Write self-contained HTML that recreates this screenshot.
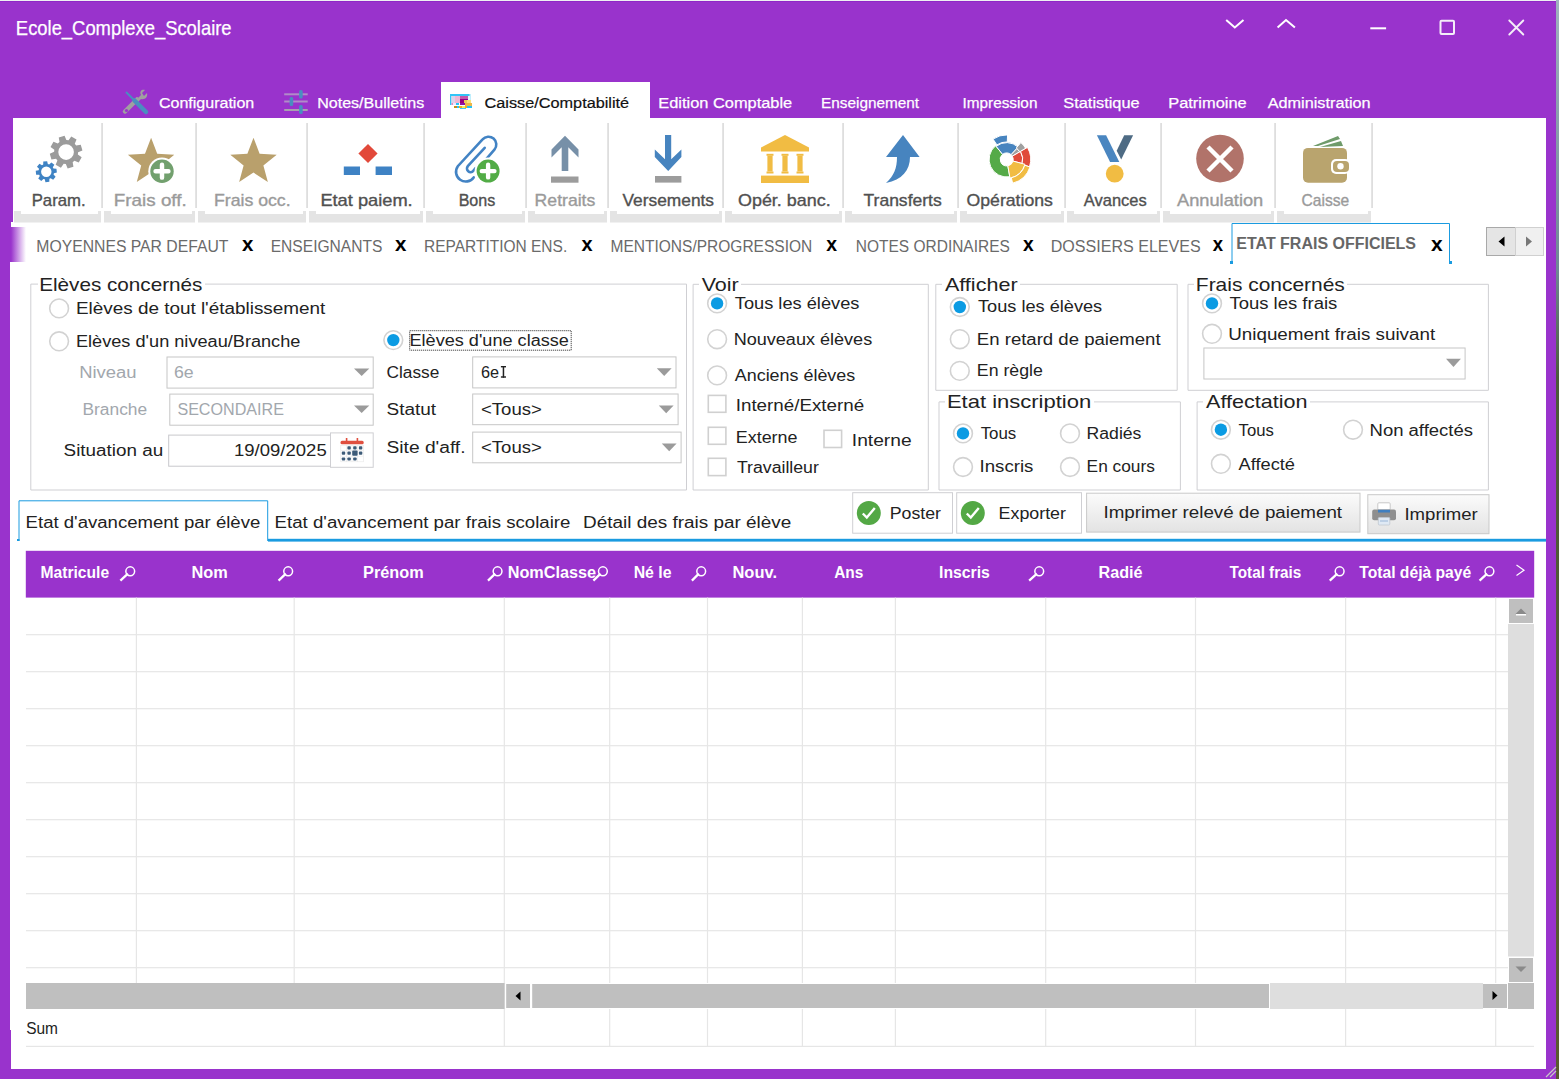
<!DOCTYPE html>
<html><head><meta charset="utf-8"><title>Ecole_Complexe_Scolaire</title>
<style>html,body{margin:0;padding:0;background:#9933cc;overflow:hidden;width:1559px;height:1079px}
svg{display:block} text{font-family:"Liberation Sans",sans-serif;white-space:pre}</style></head>
<body><svg width="1559" height="1079" viewBox="0 0 1559 1079">
<rect x="0.00" y="0.00" width="1559.00" height="1079.00" fill="#9933cc" />
<rect x="0.00" y="0.00" width="1559.00" height="1.00" fill="#eef0f2" />
<rect x="0.00" y="1.00" width="1556.00" height="0.60" fill="#8a20c4" />
<defs><linearGradient id="desk" x1="0" y1="0" x2="0" y2="1"><stop offset="0" stop-color="#9fb2bf"/><stop offset="0.25" stop-color="#6f8796"/><stop offset="0.35" stop-color="#4b5a3a"/><stop offset="1" stop-color="#5a5a30"/></linearGradient><linearGradient id="fade" x1="0" y1="0" x2="1" y2="0"><stop offset="0" stop-color="#9933cc"/><stop offset="1" stop-color="#ffffff"/></linearGradient><linearGradient id="btn" x1="0" y1="0" x2="0" y2="1"><stop offset="0" stop-color="#fbfbfb"/><stop offset="1" stop-color="#e3e3e3"/></linearGradient></defs>
<rect x="1556.00" y="0.00" width="3.00" height="1079.00" fill="url(#desk)" />
<rect x="13.00" y="118.00" width="1533.00" height="104.00" fill="#fff" />
<rect x="11.00" y="222.00" width="1535.00" height="847.00" fill="#fff" />
<rect x="10.00" y="262.00" width="1.00" height="768.00" fill="#fff" />
<path d="M1226.2,20 L1234.8,27.5 L1243.5,20" fill="none" stroke="#fff" stroke-width="2" />
<path d="M1277.6,27.5 L1286,20 L1294.9,27.5" fill="none" stroke="#fff" stroke-width="2" />
<rect x="1370.30" y="27.30" width="15.80" height="2.00" fill="#fff" />
<rect x="1440.5" y="20.7" width="13.5" height="13.3" fill="none" stroke="#f4eef8" stroke-width="2" rx="1"/>
<path d="M1509.3,20.5 L1523.3,34.5 M1523.3,20.5 L1509.3,34.5" fill="none" stroke="#f4eef8" stroke-width="1.9" stroke-linecap="round"/>
<rect x="441.00" y="82.00" width="209.00" height="36.00" fill="#fff" />
<path d="M125,111.5 L137,99.5" fill="none" stroke="#a0a0a0" stroke-width="4.5" stroke-linecap="round"/>
<path d="M136,100 L141,95 C139,91 142,89 145,90 L142,93 L144,96 L147,93 C148,97 145,100 141,99 L137,103 Z" fill="#a0a0a0" stroke="none" stroke-width="1" />
<circle cx="126.50" cy="110.50" r="1.60" fill="#9933cc" stroke="none" stroke-width="1" />
<path d="M126,92 L135,101" fill="none" stroke="#4a8ec0" stroke-width="2" />
<path d="M134.5,100.5 L146,112" fill="none" stroke="#4a8ec0" stroke-width="4.5" stroke-linecap="round"/>
<rect x="284.20" y="93.30" width="23.50" height="2.00" fill="#b08cc8" />
<rect x="284.20" y="100.50" width="23.50" height="2.00" fill="#b08cc8" />
<rect x="284.20" y="109.00" width="23.50" height="2.00" fill="#a8a0b0" />
<rect x="299.10" y="90.00" width="3.60" height="8.50" fill="#4a8ec0" rx="1.5"/>
<rect x="289.60" y="97.00" width="3.60" height="9.00" fill="#4a8ec0" rx="1.5"/>
<rect x="299.10" y="105.00" width="3.60" height="9.00" fill="#4a8ec0" rx="1.5"/>
<rect x="450.00" y="94.00" width="21.00" height="2.00" fill="#33c4f6" />
<rect x="450.00" y="94.00" width="1.50" height="11.00" fill="#33c4f6" />
<rect x="469.50" y="94.00" width="1.50" height="6.00" fill="#bfeefc" />
<rect x="451.50" y="96.00" width="3.50" height="7.00" fill="#dcd2ea" />
<rect x="455.00" y="96.00" width="5.00" height="7.00" fill="#efb6d4" />
<rect x="460.00" y="96.00" width="8.00" height="3.00" fill="#c458ac" />
<rect x="468.00" y="96.00" width="2.00" height="4.00" fill="#e6f8fe" />
<rect x="460.00" y="99.00" width="4.00" height="5.00" fill="#98007e" />
<rect x="463.00" y="99.00" width="5.00" height="1.00" fill="#8a0096" />
<rect x="464.00" y="100.00" width="7.00" height="3.00" fill="#ecc85a" />
<rect x="467.00" y="100.00" width="4.00" height="3.00" fill="#f7e27e" />
<rect x="460.00" y="103.00" width="5.00" height="2.00" fill="#8c12a6" />
<rect x="451.50" y="103.00" width="1.50" height="2.00" fill="#e088c4" />
<rect x="453.00" y="103.00" width="3.00" height="2.00" fill="#f2e2fe" />
<rect x="456.00" y="103.00" width="3.00" height="2.00" fill="#22c2f8" />
<rect x="465.00" y="103.00" width="7.00" height="3.00" fill="#eeb648" />
<rect x="454.00" y="106.00" width="3.00" height="2.00" fill="#c48a1e" />
<rect x="457.00" y="106.00" width="2.00" height="2.00" fill="#22c2f8" />
<rect x="459.00" y="106.00" width="8.00" height="2.00" fill="#eeb020" />
<rect x="462.00" y="106.00" width="3.00" height="2.00" fill="#f6ec60" />
<rect x="467.00" y="106.00" width="5.00" height="2.00" fill="#22c2f8" />
<rect x="460.00" y="108.00" width="6.00" height="1.00" fill="#44c8f8" />
<rect x="101.20" y="123.00" width="1.80" height="85.00" fill="#dedede" />
<rect x="195.20" y="123.00" width="1.80" height="85.00" fill="#dedede" />
<rect x="306.20" y="123.00" width="1.80" height="85.00" fill="#dedede" />
<rect x="423.20" y="123.00" width="1.80" height="85.00" fill="#dedede" />
<rect x="525.20" y="123.00" width="1.80" height="85.00" fill="#dedede" />
<rect x="607.20" y="123.00" width="1.80" height="85.00" fill="#dedede" />
<rect x="722.20" y="123.00" width="1.80" height="85.00" fill="#dedede" />
<rect x="842.20" y="123.00" width="1.80" height="85.00" fill="#dedede" />
<rect x="957.20" y="123.00" width="1.80" height="85.00" fill="#dedede" />
<rect x="1064.20" y="123.00" width="1.80" height="85.00" fill="#dedede" />
<rect x="1160.20" y="123.00" width="1.80" height="85.00" fill="#dedede" />
<rect x="1274.20" y="123.00" width="1.80" height="85.00" fill="#dedede" />
<rect x="1371.20" y="123.00" width="1.80" height="85.00" fill="#dedede" />
<rect x="14.00" y="211.00" width="87.00" height="11.50" fill="#e4e4e4" />
<rect x="21.00" y="211.00" width="77.00" height="3.00" fill="#fff" />
<rect x="104.00" y="211.00" width="91.00" height="11.50" fill="#e4e4e4" />
<rect x="111.00" y="211.00" width="81.00" height="3.00" fill="#fff" />
<rect x="198.00" y="211.00" width="108.00" height="11.50" fill="#e4e4e4" />
<rect x="205.00" y="211.00" width="98.00" height="3.00" fill="#fff" />
<rect x="309.00" y="211.00" width="114.00" height="11.50" fill="#e4e4e4" />
<rect x="316.00" y="211.00" width="104.00" height="3.00" fill="#fff" />
<rect x="426.00" y="211.00" width="99.00" height="11.50" fill="#e4e4e4" />
<rect x="433.00" y="211.00" width="89.00" height="3.00" fill="#fff" />
<rect x="528.00" y="211.00" width="79.00" height="11.50" fill="#e4e4e4" />
<rect x="535.00" y="211.00" width="69.00" height="3.00" fill="#fff" />
<rect x="610.00" y="211.00" width="112.00" height="11.50" fill="#e4e4e4" />
<rect x="617.00" y="211.00" width="102.00" height="3.00" fill="#fff" />
<rect x="725.00" y="211.00" width="117.00" height="11.50" fill="#e4e4e4" />
<rect x="732.00" y="211.00" width="107.00" height="3.00" fill="#fff" />
<rect x="845.00" y="211.00" width="112.00" height="11.50" fill="#e4e4e4" />
<rect x="852.00" y="211.00" width="102.00" height="3.00" fill="#fff" />
<rect x="960.00" y="211.00" width="104.00" height="11.50" fill="#e4e4e4" />
<rect x="967.00" y="211.00" width="94.00" height="3.00" fill="#fff" />
<rect x="1067.00" y="211.00" width="93.00" height="11.50" fill="#e4e4e4" />
<rect x="1074.00" y="211.00" width="83.00" height="3.00" fill="#fff" />
<rect x="1163.00" y="211.00" width="111.00" height="11.50" fill="#e4e4e4" />
<rect x="1170.00" y="211.00" width="101.00" height="3.00" fill="#fff" />
<rect x="1277.00" y="211.00" width="94.00" height="11.50" fill="#e4e4e4" />
<rect x="1284.00" y="211.00" width="84.00" height="3.00" fill="#fff" />
<path d="M77.85,154.53 L81.66,157.28 L78.74,162.55 L74.39,160.78 L72.69,162.13 L73.44,166.76 L67.64,168.43 L65.83,164.10 L63.67,163.85 L60.92,167.66 L55.65,164.74 L57.42,160.39 L56.07,158.69 L51.44,159.44 L49.77,153.64 L54.10,151.83 L54.35,149.67 L50.54,146.92 L53.46,141.65 L57.81,143.42 L59.51,142.07 L58.76,137.44 L64.56,135.77 L66.37,140.10 L68.53,140.35 L71.28,136.54 L76.55,139.46 L74.78,143.81 L76.13,145.51 L80.76,144.76 L82.43,150.56 L78.10,152.37 Z M73.90,152.10 A7.8,7.8 0 1,0 58.30,152.10 A7.8,7.8 0 1,0 73.90,152.10 Z" fill="#9b9b9b" stroke="none" stroke-width="1" fill-rule="evenodd"/>
<path d="M53.46,168.61 L56.46,168.67 L56.87,172.55 L53.95,173.23 L53.55,174.58 L55.62,176.74 L53.17,179.77 L50.63,178.19 L49.39,178.86 L49.33,181.86 L45.45,182.27 L44.77,179.35 L43.42,178.95 L41.26,181.02 L38.23,178.57 L39.81,176.03 L39.14,174.79 L36.14,174.73 L35.73,170.85 L38.65,170.17 L39.05,168.82 L36.98,166.66 L39.43,163.63 L41.97,165.21 L43.21,164.54 L43.27,161.54 L47.15,161.13 L47.83,164.05 L49.18,164.45 L51.34,162.38 L54.37,164.83 L52.79,167.37 Z M51.50,171.70 A5.2,5.2 0 1,0 41.10,171.70 A5.2,5.2 0 1,0 51.50,171.70 Z" fill="#3f83c4" stroke="none" stroke-width="1" fill-rule="evenodd"/>
<path d="M151.10,137.80 L157.21,153.79 L174.31,154.66 L160.99,165.41 L165.44,181.94 L151.10,172.59 L136.76,181.94 L141.21,165.41 L127.89,154.66 L144.99,153.79 Z" fill="#b9a06c" stroke="none" stroke-width="1" />
<circle cx="162.00" cy="171.20" r="13.70" fill="#fff" stroke="none" stroke-width="1" />
<circle cx="162.00" cy="171.20" r="11.70" fill="#72a06e" stroke="none" stroke-width="1" />
<path d="M155.57,171.20 L168.43,171.20 M162.00,164.77 L162.00,177.63" fill="none" stroke="#fff" stroke-width="4.446" stroke-linecap="round"/>
<path d="M253.50,137.80 L259.61,153.79 L276.71,154.66 L263.39,165.41 L267.84,181.94 L253.50,172.59 L239.16,181.94 L243.61,165.41 L230.29,154.66 L247.39,153.79 Z" fill="#b9a06c" stroke="none" stroke-width="1" />
<path d="M368,143.9 L377.6,153.5 L368,163.1 L358.4,153.5 Z" fill="#e2493a" stroke="none" stroke-width="1" />
<rect x="343.80" y="166.50" width="16.20" height="8.50" fill="#3e82c4" />
<rect x="375.60" y="166.50" width="16.40" height="8.50" fill="#3e82c4" />
<path d="M473.70,177.40 A9.2,9.2 0 1,1 457.81,166.22 L482.57,139.43 A7.8,7.8 0 0,1 494.43,149.57 L486.63,158.69" fill="none" stroke="#4283c4" stroke-width="2.6" stroke-linecap="round"/>
<path d="M484.70,147.80 L467.80,166.20 A3.6,3.6 0 0,0 473.27,170.88 L475.55,168.22" fill="none" stroke="#4283c4" stroke-width="2.6" stroke-linecap="round"/>
<circle cx="488.10" cy="171.10" r="13.50" fill="#fff" stroke="none" stroke-width="1" />
<circle cx="488.10" cy="171.10" r="11.50" fill="#52ac46" stroke="none" stroke-width="1" />
<path d="M481.78,171.10 L494.43,171.10 M488.10,164.78 L488.10,177.42" fill="none" stroke="#fff" stroke-width="4.37" stroke-linecap="round"/>
<path d="M565,135.8 L578.5,149.5 L578.5,157.4 L568.3,147.2 L568.3,171 L561.7,171 L561.7,147.2 L551.5,157.4 L551.5,149.5 Z" fill="#7790a8" stroke="none" stroke-width="1" />
<rect x="551.00" y="176.50" width="27.50" height="6.20" fill="#9c9c9c" />
<path d="M668.2,171 L681.4,157 L681.4,149.5 L671.2,159.3 L671.2,135 L665,135 L665,159.3 L654.8,149.5 L654.8,157 Z" fill="#4784bf" stroke="none" stroke-width="1" />
<rect x="655.00" y="176.00" width="26.40" height="6.60" fill="#9c9c9c" />
<path d="M785,135 L809,147.5 L809,151.6 L761,151.6 L761,147.5 Z" fill="#f1bc43" stroke="none" stroke-width="1" />
<rect x="766.50" y="153.80" width="7.00" height="2.00" fill="#f1bc43" />
<rect x="767.40" y="155.80" width="5.20" height="15.70" fill="#f1bc43" />
<rect x="766.50" y="171.50" width="7.00" height="2.00" fill="#f1bc43" />
<rect x="781.50" y="153.80" width="7.00" height="2.00" fill="#f1bc43" />
<rect x="782.40" y="155.80" width="5.20" height="15.70" fill="#f1bc43" />
<rect x="781.50" y="171.50" width="7.00" height="2.00" fill="#f1bc43" />
<rect x="796.50" y="153.80" width="7.00" height="2.00" fill="#f1bc43" />
<rect x="797.40" y="155.80" width="5.20" height="15.70" fill="#f1bc43" />
<rect x="796.50" y="171.50" width="7.00" height="2.00" fill="#f1bc43" />
<rect x="761.00" y="175.60" width="48.00" height="7.40" fill="#f1bc43" />
<path d="M903,135 L919.6,157 L910,157 C910,170 902,180 886,183 C894,176 897,168 897,157 L886,157 Z" fill="#4784bf" stroke="none" stroke-width="1" />
<path d="M1009.76,176.73 A17.6,17.6 0 0,1 995.62,145.72 L1002.61,154.35 A6.5,6.5 0 0,0 1007.83,165.80 Z" fill="#55aa48" stroke="#fff" stroke-width="1" />
<path d="M996.13,146.34 A16.8,16.8 0 0,1 1018.16,147.11 L1011.13,154.65 A6.5,6.5 0 0,0 1002.61,154.35 Z" fill="#4784bf" stroke="#fff" stroke-width="1" />
<path d="M993.00,139.09 A24.5,24.5 0 0,1 1007.56,134.91 L1007.31,141.91 A17.5,17.5 0 0,0 996.91,144.89 Z" fill="#4784bf" stroke="#fff" stroke-width="1" />
<path d="M1016.93,148.43 A15,15 0 0,1 1019.69,151.90 L1012.33,156.15 A6.5,6.5 0 0,0 1011.13,154.65 Z" fill="#a0a0a0" stroke="#fff" stroke-width="1" />
<path d="M1020.84,142.55 A22,22 0 0,1 1025.75,148.40 L1019.69,151.90 A15,15 0 0,0 1016.34,147.91 Z" fill="#a0a0a0" stroke="#fff" stroke-width="1" />
<path d="M1020.56,151.40 A16,16 0 0,1 1022.15,163.54 L1012.98,161.08 A6.5,6.5 0 0,0 1012.33,156.15 Z" fill="#e04a3a" stroke="#fff" stroke-width="1" />
<path d="M1027.48,147.40 A24,24 0 0,1 1029.53,166.82 L1021.92,164.34 A16,16 0 0,0 1020.56,151.40 Z" fill="#e04a3a" stroke="#fff" stroke-width="1" />
<path d="M1025.05,164.32 A19,19 0 0,1 1010.00,178.11 L1007.83,165.80 A6.5,6.5 0 0,0 1012.98,161.08 Z" fill="#f1bc43" stroke="#fff" stroke-width="1" />
<path d="M1030.00,166.97 A24.5,24.5 0 0,1 1012.63,183.17 L1011.30,177.84 A19,19 0 0,0 1024.77,165.27 Z" fill="#f1bc43" stroke="#fff" stroke-width="1" />
<path d="M1096.9,135.2 L1106.1,135.2 L1119.3,161.9 L1110.1,161.9 Z" fill="#4a86c0" stroke="none" stroke-width="1" />
<path d="M1124.2,135.2 L1133.1,135.2 L1121.2,159.5 L1116.7,150.7 Z" fill="#4e6b84" stroke="none" stroke-width="1" />
<circle cx="1114.70" cy="173.70" r="8.90" fill="#f1bc43" stroke="none" stroke-width="1" />
<circle cx="1220.00" cy="158.60" r="23.80" fill="#b1736a" stroke="none" stroke-width="1" />
<path d="M1208,147 L1232,171 M1232,147 L1208,171" fill="none" stroke="#fff" stroke-width="4.5" />
<path d="M1313,146 L1338,136 L1340,139 L1318,146 Z" fill="#6f9b6a" stroke="none" stroke-width="1" />
<path d="M1320,147 L1341,141 L1343,146 Z" fill="#6f9b6a" stroke="none" stroke-width="1" />
<rect x="1303.00" y="147.90" width="44.00" height="34.80" fill="#b9a46e" rx="5"/>
<rect x="1331.00" y="159.00" width="19.00" height="15.00" fill="#fff" rx="5"/>
<rect x="1333.00" y="161.00" width="16.00" height="11.00" fill="#b9a46e" rx="4"/>
<circle cx="1340.50" cy="166.30" r="3.20" fill="#fff" stroke="none" stroke-width="1" />
<rect x="11.00" y="227.00" width="15.00" height="35.00" fill="url(#fade)" />
<path d="M1232,263 L1232,223.5 L1449.5,223.5 L1449.5,263" fill="none" stroke="#1a9be0" stroke-width="1" />
<rect x="1230.00" y="261.00" width="3.00" height="3.00" fill="#1a9be0" />
<rect x="1449.00" y="261.00" width="3.00" height="3.00" fill="#1a9be0" />
<rect x="1486.50" y="227.50" width="29.00" height="28.00" fill="#e5e5e5" stroke="#a9a9a9" stroke-width="1" />
<rect x="1515.50" y="227.50" width="28.00" height="28.00" fill="#f0f0f0" stroke="#d0d0d0" stroke-width="1" />
<path d="M1498.5,241.5 L1504.5,236.5 L1504.5,246.5 Z" fill="#000" stroke="none" stroke-width="1" />
<path d="M1532,241.5 L1526,236.5 L1526,246.5 Z" fill="#777" stroke="none" stroke-width="1" />
<path d="M38.0,284.1 L30.8,284.1 L30.8,490.0 L686.5,490.0 L686.5,284.1 L205.0,284.1" fill="none" stroke="#cfcfd3" stroke-width="1" />
<path d="M699.0,284.3 L693.1,284.3 L693.1,490.0 L928.3,490.0 L928.3,284.3 L741.0,284.3" fill="none" stroke="#cfcfd3" stroke-width="1" />
<path d="M942.0,284.3 L935.8,284.3 L935.8,390.3 L1177.2,390.3 L1177.2,284.3 L1020.0,284.3" fill="none" stroke="#cfcfd3" stroke-width="1" />
<path d="M945.0,401.9 L939.0,401.9 L939.0,490.0 L1180.4,490.0 L1180.4,401.9 L1094.0,401.9" fill="none" stroke="#cfcfd3" stroke-width="1" />
<path d="M1194.0,284.3 L1188.0,284.3 L1188.0,390.3 L1488.4,390.3 L1488.4,284.3 L1347.0,284.3" fill="none" stroke="#cfcfd3" stroke-width="1" />
<path d="M1203.0,401.9 L1197.1,401.9 L1197.1,490.0 L1488.4,490.0 L1488.4,401.9 L1310.0,401.9" fill="none" stroke="#cfcfd3" stroke-width="1" />
<circle cx="59.10" cy="308.40" r="9.40" fill="#fff" stroke="#d2d2d2" stroke-width="1.6" />
<circle cx="59.10" cy="341.30" r="9.40" fill="#fff" stroke="#d2d2d2" stroke-width="1.6" />
<circle cx="393.30" cy="340.10" r="9.40" fill="#fff" stroke="#d2d2d2" stroke-width="1.6" />
<circle cx="393.30" cy="340.10" r="6.20" fill="#0b9be3" stroke="none" stroke-width="1" />
<rect x="409.7" y="330.7" width="161.5" height="19.5" fill="none" stroke="#222" stroke-width="1" stroke-dasharray="1,1"/>
<rect x="167.00" y="357.00" width="206.20" height="31.10" fill="#fff" stroke="#c6c6c6" stroke-width="1" />
<path d="M354.00,368.50 L369.30,368.50 L361.65,376.00 Z" fill="#9b9b9b" stroke="none" stroke-width="1" />
<rect x="169.80" y="394.10" width="203.40" height="31.10" fill="#fff" stroke="#c6c6c6" stroke-width="1" />
<path d="M354.00,405.60 L369.30,405.60 L361.65,413.00 Z" fill="#9b9b9b" stroke="none" stroke-width="1" />
<rect x="168.70" y="435.10" width="161.80" height="31.10" fill="#fff" stroke="#c8c8cc" stroke-width="1" />
<rect x="330.50" y="432.90" width="42.70" height="34.40" fill="#fff" stroke="#cfcfd3" stroke-width="1" />
<rect x="340.50" y="440.80" width="23.20" height="3.50" fill="#e04f3f" rx="1.5"/>
<rect x="345.80" y="438.00" width="1.60" height="3.00" fill="#e04f3f" />
<rect x="356.60" y="438.00" width="1.60" height="3.00" fill="#e04f3f" />
<rect x="340.50" y="445.00" width="0.60" height="17.00" fill="#e8e8e8" />
<rect x="346.00" y="445.00" width="0.60" height="17.00" fill="#e8e8e8" />
<rect x="351.70" y="445.00" width="0.60" height="17.00" fill="#e8e8e8" />
<rect x="357.40" y="445.00" width="0.60" height="17.00" fill="#e8e8e8" />
<rect x="363.10" y="445.00" width="0.60" height="17.00" fill="#e8e8e8" />
<rect x="340.80" y="444.90" width="22.60" height="0.60" fill="#e8e8e8" />
<rect x="340.80" y="450.20" width="22.60" height="0.60" fill="#e8e8e8" />
<rect x="340.80" y="455.80" width="22.60" height="0.60" fill="#e8e8e8" />
<rect x="340.80" y="461.50" width="22.60" height="0.60" fill="#e8e8e8" />
<rect x="347.40" y="446.30" width="3.40" height="3.20" fill="#3d5b78" rx="0.8"/>
<rect x="347.40" y="457.40" width="3.40" height="3.20" fill="#3d5b78" rx="0.8"/>
<rect x="347.40" y="451.60" width="3.40" height="3.20" fill="#3d5b78" rx="0.8"/>
<rect x="358.90" y="446.30" width="3.40" height="3.20" fill="#3d5b78" rx="0.8"/>
<rect x="341.80" y="457.40" width="3.40" height="3.20" fill="#3d5b78" rx="0.8"/>
<rect x="353.20" y="446.30" width="3.40" height="3.20" fill="#3d5b78" rx="0.8"/>
<rect x="353.20" y="457.40" width="3.40" height="3.20" fill="#3d5b78" rx="0.8"/>
<rect x="341.80" y="451.60" width="3.40" height="3.20" fill="#3d5b78" rx="0.8"/>
<rect x="358.90" y="451.60" width="3.40" height="3.20" fill="#3d5b78" rx="0.8"/>
<rect x="352.20" y="450.60" width="5.40" height="5.20" fill="#3d5b78" rx="1"/>
<rect x="472.70" y="356.90" width="203.30" height="31.00" fill="#fff" stroke="#c6c6c6" stroke-width="1" />
<path d="M656.80,368.30 L671.60,368.30 L664.20,376.10 Z" fill="#9b9b9b" stroke="none" stroke-width="1" />
<rect x="502.70" y="366.00" width="1.50" height="11.70" fill="#222" />
<rect x="500.90" y="366.00" width="5.10" height="1.40" fill="#222" />
<rect x="500.90" y="376.30" width="5.10" height="1.40" fill="#222" />
<rect x="472.70" y="394.00" width="205.40" height="30.70" fill="#fff" stroke="#c6c6c6" stroke-width="1" />
<path d="M658.80,405.50 L673.60,405.50 L666.20,413.30 Z" fill="#9b9b9b" stroke="none" stroke-width="1" />
<rect x="472.70" y="432.10" width="208.40" height="30.70" fill="#fff" stroke="#c6c6c6" stroke-width="1" />
<path d="M661.80,443.50 L676.60,443.50 L669.20,451.30 Z" fill="#9b9b9b" stroke="none" stroke-width="1" />
<circle cx="717.10" cy="303.40" r="9.40" fill="#fff" stroke="#d2d2d2" stroke-width="1.6" />
<circle cx="717.10" cy="303.40" r="6.20" fill="#0b9be3" stroke="none" stroke-width="1" />
<circle cx="717.10" cy="339.20" r="9.40" fill="#fff" stroke="#d2d2d2" stroke-width="1.6" />
<circle cx="717.10" cy="375.40" r="9.40" fill="#fff" stroke="#d2d2d2" stroke-width="1.6" />
<rect x="708.30" y="395.40" width="17.60" height="16.90" fill="#fff" stroke="#d0d0d0" stroke-width="1.6" />
<rect x="708.30" y="427.30" width="17.60" height="17.00" fill="#fff" stroke="#d0d0d0" stroke-width="1.6" />
<rect x="824.00" y="430.30" width="17.60" height="17.20" fill="#fff" stroke="#d0d0d0" stroke-width="1.6" />
<rect x="708.30" y="458.30" width="17.60" height="17.30" fill="#fff" stroke="#d0d0d0" stroke-width="1.6" />
<circle cx="959.80" cy="307.00" r="9.40" fill="#fff" stroke="#d2d2d2" stroke-width="1.6" />
<circle cx="959.80" cy="307.00" r="6.20" fill="#0b9be3" stroke="none" stroke-width="1" />
<circle cx="959.80" cy="339.20" r="9.40" fill="#fff" stroke="#d2d2d2" stroke-width="1.6" />
<circle cx="959.80" cy="370.90" r="9.40" fill="#fff" stroke="#d2d2d2" stroke-width="1.6" />
<circle cx="963.00" cy="433.40" r="9.40" fill="#fff" stroke="#d2d2d2" stroke-width="1.6" />
<circle cx="963.00" cy="433.40" r="6.20" fill="#0b9be3" stroke="none" stroke-width="1" />
<circle cx="1070.00" cy="433.40" r="9.40" fill="#fff" stroke="#d2d2d2" stroke-width="1.6" />
<circle cx="963.00" cy="467.00" r="9.40" fill="#fff" stroke="#d2d2d2" stroke-width="1.6" />
<circle cx="1070.00" cy="467.00" r="9.40" fill="#fff" stroke="#d2d2d2" stroke-width="1.6" />
<circle cx="1212.00" cy="303.40" r="9.40" fill="#fff" stroke="#d2d2d2" stroke-width="1.6" />
<circle cx="1212.00" cy="303.40" r="6.20" fill="#0b9be3" stroke="none" stroke-width="1" />
<circle cx="1212.00" cy="333.80" r="9.40" fill="#fff" stroke="#d2d2d2" stroke-width="1.6" />
<rect x="1203.90" y="348.00" width="261.20" height="31.00" fill="#fff" stroke="#c6c6c6" stroke-width="1" />
<path d="M1446.00,358.80 L1460.90,358.80 L1453.45,366.90 Z" fill="#9b9b9b" stroke="none" stroke-width="1" />
<circle cx="1220.90" cy="429.70" r="9.40" fill="#fff" stroke="#d2d2d2" stroke-width="1.6" />
<circle cx="1220.90" cy="429.70" r="6.20" fill="#0b9be3" stroke="none" stroke-width="1" />
<circle cx="1353.00" cy="429.70" r="9.40" fill="#fff" stroke="#d2d2d2" stroke-width="1.6" />
<circle cx="1220.90" cy="463.80" r="9.40" fill="#fff" stroke="#d2d2d2" stroke-width="1.6" />
<rect x="268.00" y="538.80" width="1278.00" height="2.80" fill="#1a9be0" />
<path d="M19,541 L19,500.8 L267.7,500.8 L267.7,541" fill="none" stroke="#1a9be0" stroke-width="1" />
<rect x="17.00" y="539.00" width="2.50" height="2.00" fill="#1a9be0" />
<rect x="852.70" y="492.70" width="99.80" height="40.50" fill="#fff" stroke="#cfcfd3" stroke-width="1" />
<circle cx="868.80" cy="513.00" r="12.00" fill="#53a845" stroke="none" stroke-width="1" />
<path d="M862.8,513.5 L866.8,517.5 L874.8,508.0" fill="none" stroke="#fff" stroke-width="2.4" />
<rect x="956.70" y="492.70" width="124.80" height="40.50" fill="#fff" stroke="#cfcfd3" stroke-width="1" />
<circle cx="972.80" cy="513.00" r="12.00" fill="#53a845" stroke="none" stroke-width="1" />
<path d="M966.8,513.5 L970.8,517.5 L978.8,508.0" fill="none" stroke="#fff" stroke-width="2.4" />
<rect x="1086.60" y="493.20" width="273.40" height="38.90" fill="url(#btn)" stroke="#c9c9c9" stroke-width="1" />
<rect x="1367.80" y="494.70" width="121.20" height="39.00" fill="url(#btn)" stroke="#c9c9c9" stroke-width="1" />
<rect x="1377.80" y="502.80" width="12.40" height="7.20" fill="#fff" stroke="#c8c8c8" stroke-width="1" rx="1"/>
<rect x="1372.20" y="509.40" width="23.80" height="10.80" fill="#8f8f8f" rx="2"/>
<rect x="1378.00" y="509.80" width="12.00" height="2.70" fill="#3f7fc0" />
<rect x="1378.30" y="517.50" width="11.50" height="7.50" fill="#dfe9f4" stroke="#c0c8d0" stroke-width="0.8" rx="1"/>
<rect x="1380.00" y="520.50" width="8.00" height="1.00" fill="#9ab6d6" />
<rect x="25.80" y="550.80" width="1508.40" height="46.80" fill="#9933cc" />
<circle cx="130.23" cy="571.27" r="4.40" fill="none" stroke="#fff" stroke-width="1.5" />
<line x1="121.20" y1="579.80" x2="127.06" y2="574.44" stroke="#fff" stroke-width="2.3" stroke-linecap="square"/>
<circle cx="288.17" cy="571.27" r="4.40" fill="none" stroke="#fff" stroke-width="1.5" />
<line x1="279.40" y1="579.80" x2="285.00" y2="574.44" stroke="#fff" stroke-width="2.3" stroke-linecap="square"/>
<circle cx="497.57" cy="571.27" r="4.40" fill="none" stroke="#fff" stroke-width="1.5" />
<line x1="488.80" y1="579.80" x2="494.40" y2="574.44" stroke="#fff" stroke-width="2.3" stroke-linecap="square"/>
<circle cx="602.90" cy="571.27" r="4.40" fill="none" stroke="#fff" stroke-width="1.5" />
<line x1="594.20" y1="579.80" x2="599.73" y2="574.44" stroke="#fff" stroke-width="2.3" stroke-linecap="square"/>
<circle cx="701.20" cy="571.27" r="4.40" fill="none" stroke="#fff" stroke-width="1.5" />
<line x1="692.70" y1="579.80" x2="698.03" y2="574.44" stroke="#fff" stroke-width="2.3" stroke-linecap="square"/>
<circle cx="1039.23" cy="571.27" r="4.40" fill="none" stroke="#fff" stroke-width="1.5" />
<line x1="1030.00" y1="579.80" x2="1036.06" y2="574.44" stroke="#fff" stroke-width="2.3" stroke-linecap="square"/>
<circle cx="1339.63" cy="571.27" r="4.40" fill="none" stroke="#fff" stroke-width="1.5" />
<line x1="1330.60" y1="579.80" x2="1336.46" y2="574.44" stroke="#fff" stroke-width="2.3" stroke-linecap="square"/>
<circle cx="1489.43" cy="571.27" r="4.40" fill="none" stroke="#fff" stroke-width="1.5" />
<line x1="1480.40" y1="579.80" x2="1486.26" y2="574.44" stroke="#fff" stroke-width="2.3" stroke-linecap="square"/>
<path d="M1516.5,565 L1524,570.2 L1516.5,575.5" fill="none" stroke="#fff" stroke-width="1.2" />
<rect x="26.00" y="634.10" width="1482.00" height="1.20" fill="#e6e6e6" />
<rect x="26.00" y="671.10" width="1482.00" height="1.20" fill="#e6e6e6" />
<rect x="26.00" y="708.10" width="1482.00" height="1.20" fill="#e6e6e6" />
<rect x="26.00" y="745.10" width="1482.00" height="1.20" fill="#e6e6e6" />
<rect x="26.00" y="782.10" width="1482.00" height="1.20" fill="#e6e6e6" />
<rect x="26.00" y="819.10" width="1482.00" height="1.20" fill="#e6e6e6" />
<rect x="26.00" y="856.10" width="1482.00" height="1.20" fill="#e6e6e6" />
<rect x="26.00" y="893.10" width="1482.00" height="1.20" fill="#e6e6e6" />
<rect x="26.00" y="930.10" width="1482.00" height="1.20" fill="#e6e6e6" />
<rect x="26.00" y="967.10" width="1482.00" height="1.20" fill="#e6e6e6" />
<rect x="135.80" y="597.60" width="1.20" height="385.40" fill="#e6e6e6" />
<rect x="293.60" y="597.60" width="1.20" height="385.40" fill="#e6e6e6" />
<rect x="503.70" y="597.60" width="1.20" height="385.40" fill="#e6e6e6" />
<rect x="609.10" y="597.60" width="1.20" height="385.40" fill="#e6e6e6" />
<rect x="706.90" y="597.60" width="1.20" height="385.40" fill="#e6e6e6" />
<rect x="801.80" y="597.60" width="1.20" height="385.40" fill="#e6e6e6" />
<rect x="894.80" y="597.60" width="1.20" height="385.40" fill="#e6e6e6" />
<rect x="1045.10" y="597.60" width="1.20" height="385.40" fill="#e6e6e6" />
<rect x="1194.90" y="597.60" width="1.20" height="385.40" fill="#e6e6e6" />
<rect x="1345.00" y="597.60" width="1.20" height="385.40" fill="#e6e6e6" />
<rect x="1495.10" y="597.60" width="1.20" height="385.40" fill="#e6e6e6" />
<rect x="1508.00" y="624.00" width="26.00" height="332.50" fill="#dedede" />
<rect x="1509.00" y="599.00" width="24.00" height="24.00" fill="#bfbfbf" />
<path d="M1515.5,614 L1521,608.5 L1526.5,614 Z" fill="#8a8a8a" stroke="none" stroke-width="1" />
<rect x="1516.00" y="614.00" width="10.00" height="1.50" fill="#fff" />
<rect x="1509.00" y="958.00" width="24.00" height="24.00" fill="#bfbfbf" />
<path d="M1515.5,966.5 L1526.5,966.5 L1521,972 Z" fill="#8a8a8a" stroke="none" stroke-width="1" />
<rect x="26.00" y="983.00" width="478.70" height="26.00" fill="#bfbfbf" />
<rect x="506.20" y="984.00" width="23.80" height="24.00" fill="#bfbfbf" />
<path d="M515.5,996 L520.5,991.5 L520.5,1000.5 Z" fill="#000" stroke="none" stroke-width="1" />
<rect x="532.20" y="984.00" width="736.80" height="24.00" fill="#bfbfbf" />
<rect x="1270.00" y="983.00" width="213.00" height="26.00" fill="#dedede" />
<rect x="1483.00" y="984.00" width="24.00" height="24.00" fill="#bfbfbf" />
<path d="M1497.5,995.5 L1492.5,991 L1492.5,1000 Z" fill="#000" stroke="none" stroke-width="1" />
<rect x="1508.00" y="983.00" width="26.00" height="26.00" fill="#bfbfbf" />
<rect x="503.70" y="1009.00" width="1.20" height="37.00" fill="#e6e6e6" />
<rect x="609.10" y="1009.00" width="1.20" height="37.00" fill="#e6e6e6" />
<rect x="706.90" y="1009.00" width="1.20" height="37.00" fill="#e6e6e6" />
<rect x="801.80" y="1009.00" width="1.20" height="37.00" fill="#e6e6e6" />
<rect x="894.80" y="1009.00" width="1.20" height="37.00" fill="#e6e6e6" />
<rect x="1045.10" y="1009.00" width="1.20" height="37.00" fill="#e6e6e6" />
<rect x="1194.90" y="1009.00" width="1.20" height="37.00" fill="#e6e6e6" />
<rect x="1345.00" y="1009.00" width="1.20" height="37.00" fill="#e6e6e6" />
<rect x="1495.10" y="1009.00" width="1.20" height="37.00" fill="#e6e6e6" />
<rect x="26.00" y="1045.80" width="1508.00" height="1.20" fill="#e6e6e6" />
<path d="M1546,1077 L1556,1067 M1550,1077 L1556,1071" fill="none" stroke="#c8c8c8" stroke-width="1.2" />
<text x="15.87" y="34.70" font-size="19.8" font-weight="normal" fill="#fff" stroke="#fff" stroke-width="0.25" textLength="215.73" lengthAdjust="spacingAndGlyphs">Ecole_Complexe_Scolaire</text>
<text x="158.90" y="108.00" font-size="15.5" font-weight="normal" fill="#fff" stroke="#fff" stroke-width="0.25" textLength="95.34" lengthAdjust="spacingAndGlyphs">Configuration</text>
<text x="317.16" y="108.00" font-size="15.5" font-weight="normal" fill="#fff" stroke="#fff" stroke-width="0.25" textLength="107.08" lengthAdjust="spacingAndGlyphs">Notes/Bulletins</text>
<text x="484.60" y="108.00" font-size="15.5" font-weight="normal" fill="#111" stroke="#111" stroke-width="0.2" textLength="144.55" lengthAdjust="spacingAndGlyphs">Caisse/Comptabilité</text>
<text x="658.24" y="108.00" font-size="15.5" font-weight="normal" fill="#fff" stroke="#fff" stroke-width="0.25" textLength="134.01" lengthAdjust="spacingAndGlyphs">Edition Comptable</text>
<text x="821.11" y="108.00" font-size="15.5" font-weight="normal" fill="#fff" stroke="#fff" stroke-width="0.25" textLength="98.00" lengthAdjust="spacingAndGlyphs">Enseignement</text>
<text x="962.51" y="108.00" font-size="15.5" font-weight="normal" fill="#fff" stroke="#fff" stroke-width="0.25" textLength="74.90" lengthAdjust="spacingAndGlyphs">Impression</text>
<text x="1063.30" y="108.00" font-size="15.5" font-weight="normal" fill="#fff" stroke="#fff" stroke-width="0.25" textLength="76.35" lengthAdjust="spacingAndGlyphs">Statistique</text>
<text x="1168.24" y="108.00" font-size="15.5" font-weight="normal" fill="#fff" stroke="#fff" stroke-width="0.25" textLength="78.42" lengthAdjust="spacingAndGlyphs">Patrimoine</text>
<text x="1267.70" y="108.00" font-size="15.5" font-weight="normal" fill="#fff" stroke="#fff" stroke-width="0.25" textLength="102.95" lengthAdjust="spacingAndGlyphs">Administration</text>
<text x="31.69" y="205.80" font-size="16.6" font-weight="normal" fill="#505050" stroke="#505050" stroke-width="0.35" textLength="53.92" lengthAdjust="spacingAndGlyphs">Param.</text>
<text x="113.87" y="205.80" font-size="16.6" font-weight="normal" fill="#9a9a9a" stroke="#9a9a9a" stroke-width="0.35" textLength="72.83" lengthAdjust="spacingAndGlyphs">Frais off.</text>
<text x="213.93" y="205.80" font-size="16.6" font-weight="normal" fill="#9a9a9a" stroke="#9a9a9a" stroke-width="0.35" textLength="76.72" lengthAdjust="spacingAndGlyphs">Frais occ.</text>
<text x="320.40" y="205.80" font-size="16.6" font-weight="normal" fill="#505050" stroke="#505050" stroke-width="0.35" textLength="92.27" lengthAdjust="spacingAndGlyphs">Etat paiem.</text>
<text x="458.63" y="205.80" font-size="16.6" font-weight="normal" fill="#505050" stroke="#505050" stroke-width="0.35" textLength="36.66" lengthAdjust="spacingAndGlyphs">Bons</text>
<text x="534.64" y="205.80" font-size="16.6" font-weight="normal" fill="#9a9a9a" stroke="#9a9a9a" stroke-width="0.35" textLength="60.68" lengthAdjust="spacingAndGlyphs">Retraits</text>
<text x="622.50" y="205.80" font-size="16.6" font-weight="normal" fill="#505050" stroke="#505050" stroke-width="0.35" textLength="91.51" lengthAdjust="spacingAndGlyphs">Versements</text>
<text x="738.00" y="205.80" font-size="16.6" font-weight="normal" fill="#505050" stroke="#505050" stroke-width="0.35" textLength="92.66" lengthAdjust="spacingAndGlyphs">Opér. banc.</text>
<text x="863.50" y="205.80" font-size="16.6" font-weight="normal" fill="#505050" stroke="#505050" stroke-width="0.35" textLength="78.21" lengthAdjust="spacingAndGlyphs">Transferts</text>
<text x="966.50" y="205.80" font-size="16.6" font-weight="normal" fill="#505050" stroke="#505050" stroke-width="0.35" textLength="86.42" lengthAdjust="spacingAndGlyphs">Opérations</text>
<text x="1083.80" y="205.80" font-size="16.6" font-weight="normal" fill="#505050" stroke="#505050" stroke-width="0.35" textLength="62.89" lengthAdjust="spacingAndGlyphs">Avances</text>
<text x="1177.00" y="205.80" font-size="16.6" font-weight="normal" fill="#9a9a9a" stroke="#9a9a9a" stroke-width="0.35" textLength="86.25" lengthAdjust="spacingAndGlyphs">Annulation</text>
<text x="1301.50" y="205.80" font-size="16.6" font-weight="normal" fill="#9a9a9a" stroke="#9a9a9a" stroke-width="0.35" textLength="47.72" lengthAdjust="spacingAndGlyphs">Caisse</text>
<text x="36.32" y="252.00" font-size="16" font-weight="normal" fill="#6a6a6a" textLength="192.16" lengthAdjust="spacingAndGlyphs">MOYENNES PAR DEFAUT</text>
<text x="242.00" y="251.00" font-size="21" font-weight="bold" fill="#000" textLength="11.39" lengthAdjust="spacingAndGlyphs">x</text>
<text x="270.73" y="252.00" font-size="16" font-weight="normal" fill="#6a6a6a" textLength="111.63" lengthAdjust="spacingAndGlyphs">ENSEIGNANTS</text>
<text x="395.00" y="251.00" font-size="21" font-weight="bold" fill="#000" textLength="11.39" lengthAdjust="spacingAndGlyphs">x</text>
<text x="424.03" y="252.00" font-size="16" font-weight="normal" fill="#6a6a6a" textLength="143.17" lengthAdjust="spacingAndGlyphs">REPARTITION ENS.</text>
<text x="581.40" y="251.00" font-size="21" font-weight="bold" fill="#000" textLength="11.10" lengthAdjust="spacingAndGlyphs">x</text>
<text x="610.53" y="252.00" font-size="16" font-weight="normal" fill="#6a6a6a" textLength="201.71" lengthAdjust="spacingAndGlyphs">MENTIONS/PROGRESSION</text>
<text x="826.30" y="251.00" font-size="21" font-weight="bold" fill="#000" textLength="10.80" lengthAdjust="spacingAndGlyphs">x</text>
<text x="855.83" y="252.00" font-size="16" font-weight="normal" fill="#6a6a6a" textLength="154.02" lengthAdjust="spacingAndGlyphs">NOTES ORDINAIRES</text>
<text x="1023.00" y="251.00" font-size="21" font-weight="bold" fill="#000" textLength="10.71" lengthAdjust="spacingAndGlyphs">x</text>
<text x="1050.70" y="252.00" font-size="16" font-weight="normal" fill="#6a6a6a" textLength="149.98" lengthAdjust="spacingAndGlyphs">DOSSIERS ELEVES</text>
<text x="1212.70" y="251.00" font-size="21" font-weight="bold" fill="#000" textLength="10.32" lengthAdjust="spacingAndGlyphs">x</text>
<text x="1236.30" y="249.40" font-size="16" font-weight="bold" fill="#666" textLength="179.67" lengthAdjust="spacingAndGlyphs">ETAT FRAIS OFFICIELS</text>
<text x="1431.00" y="250.80" font-size="21" font-weight="bold" fill="#000" textLength="11.68" lengthAdjust="spacingAndGlyphs">x</text>
<text x="39.18" y="291.30" font-size="18.5" font-weight="normal" fill="#222" textLength="163.30" lengthAdjust="spacingAndGlyphs">Elèves concernés</text>
<text x="701.70" y="290.60" font-size="18.5" font-weight="normal" fill="#222" textLength="37.09" lengthAdjust="spacingAndGlyphs">Voir</text>
<text x="944.90" y="290.60" font-size="18.5" font-weight="normal" fill="#222" textLength="72.69" lengthAdjust="spacingAndGlyphs">Afficher</text>
<text x="946.91" y="408.20" font-size="18.5" font-weight="normal" fill="#222" textLength="144.33" lengthAdjust="spacingAndGlyphs">Etat inscription</text>
<text x="1195.87" y="290.60" font-size="18.5" font-weight="normal" fill="#222" textLength="148.91" lengthAdjust="spacingAndGlyphs">Frais concernés</text>
<text x="1206.00" y="408.20" font-size="18.5" font-weight="normal" fill="#222" textLength="101.54" lengthAdjust="spacingAndGlyphs">Affectation</text>
<text x="75.92" y="314.40" font-size="16" font-weight="normal" fill="#222" textLength="249.43" lengthAdjust="spacingAndGlyphs">Elèves de tout l&#x27;établissement</text>
<text x="75.97" y="346.50" font-size="16" font-weight="normal" fill="#222" textLength="224.42" lengthAdjust="spacingAndGlyphs">Elèves d&#x27;un niveau/Branche</text>
<text x="409.47" y="345.80" font-size="16" font-weight="normal" fill="#222" textLength="159.42" lengthAdjust="spacingAndGlyphs">Elèves d&#x27;une classe</text>
<text x="79.15" y="378.00" font-size="16" font-weight="normal" fill="#a2a7ad" textLength="57.39" lengthAdjust="spacingAndGlyphs">Niveau</text>
<text x="174.00" y="378.00" font-size="16" font-weight="normal" fill="#a2a7ad" textLength="19.69" lengthAdjust="spacingAndGlyphs">6e</text>
<text x="82.51" y="415.00" font-size="16" font-weight="normal" fill="#a2a7ad" textLength="64.68" lengthAdjust="spacingAndGlyphs">Branche</text>
<text x="177.40" y="415.00" font-size="16" font-weight="normal" fill="#a2a7ad" textLength="106.48" lengthAdjust="spacingAndGlyphs">SECONDAIRE</text>
<text x="63.60" y="455.80" font-size="16" font-weight="normal" fill="#222" textLength="99.56" lengthAdjust="spacingAndGlyphs">Situation au</text>
<text x="234.04" y="455.80" font-size="16" font-weight="normal" fill="#222" textLength="92.64" lengthAdjust="spacingAndGlyphs">19/09/2025</text>
<text x="386.50" y="377.60" font-size="16" font-weight="normal" fill="#222" textLength="52.79" lengthAdjust="spacingAndGlyphs">Classe</text>
<text x="480.90" y="377.60" font-size="16" font-weight="normal" fill="#222" textLength="18.10" lengthAdjust="spacingAndGlyphs">6e</text>
<text x="386.50" y="414.60" font-size="16" font-weight="normal" fill="#222" textLength="49.54" lengthAdjust="spacingAndGlyphs">Statut</text>
<text x="481.00" y="414.60" font-size="16" font-weight="normal" fill="#222" textLength="60.90" lengthAdjust="spacingAndGlyphs">&lt;Tous&gt;</text>
<text x="386.50" y="452.70" font-size="16" font-weight="normal" fill="#222" textLength="79.03" lengthAdjust="spacingAndGlyphs">Site d&#x27;aff.</text>
<text x="481.00" y="452.70" font-size="16" font-weight="normal" fill="#222" textLength="60.90" lengthAdjust="spacingAndGlyphs">&lt;Tous&gt;</text>
<text x="734.80" y="308.70" font-size="16" font-weight="normal" fill="#222" textLength="124.60" lengthAdjust="spacingAndGlyphs">Tous les élèves</text>
<text x="733.67" y="344.90" font-size="16" font-weight="normal" fill="#222" textLength="138.53" lengthAdjust="spacingAndGlyphs">Nouveaux élèves</text>
<text x="734.80" y="380.70" font-size="16" font-weight="normal" fill="#222" textLength="120.40" lengthAdjust="spacingAndGlyphs">Anciens élèves</text>
<text x="735.73" y="411.00" font-size="16" font-weight="normal" fill="#222" textLength="128.45" lengthAdjust="spacingAndGlyphs">Interné/Externé</text>
<text x="735.78" y="442.50" font-size="16" font-weight="normal" fill="#222" textLength="61.71" lengthAdjust="spacingAndGlyphs">Externe</text>
<text x="851.80" y="445.70" font-size="16" font-weight="normal" fill="#222" textLength="59.78" lengthAdjust="spacingAndGlyphs">Interne</text>
<text x="736.90" y="473.40" font-size="16" font-weight="normal" fill="#222" textLength="81.96" lengthAdjust="spacingAndGlyphs">Travailleur</text>
<text x="978.00" y="312.30" font-size="16" font-weight="normal" fill="#222" textLength="124.20" lengthAdjust="spacingAndGlyphs">Tous les élèves</text>
<text x="976.84" y="344.90" font-size="16" font-weight="normal" fill="#222" textLength="183.72" lengthAdjust="spacingAndGlyphs">En retard de paiement</text>
<text x="976.89" y="376.30" font-size="16" font-weight="normal" fill="#222" textLength="65.99" lengthAdjust="spacingAndGlyphs">En règle</text>
<text x="980.70" y="438.70" font-size="16" font-weight="normal" fill="#222" textLength="35.60" lengthAdjust="spacingAndGlyphs">Tous</text>
<text x="1086.60" y="438.70" font-size="16" font-weight="normal" fill="#222" textLength="54.80" lengthAdjust="spacingAndGlyphs">Radiés</text>
<text x="979.53" y="472.20" font-size="16" font-weight="normal" fill="#222" textLength="53.87" lengthAdjust="spacingAndGlyphs">Inscris</text>
<text x="1086.62" y="472.20" font-size="16" font-weight="normal" fill="#222" textLength="68.28" lengthAdjust="spacingAndGlyphs">En cours</text>
<text x="1229.40" y="308.70" font-size="16" font-weight="normal" fill="#222" textLength="107.90" lengthAdjust="spacingAndGlyphs">Tous les frais</text>
<text x="1228.22" y="339.60" font-size="16" font-weight="normal" fill="#222" textLength="206.92" lengthAdjust="spacingAndGlyphs">Uniquement frais suivant</text>
<text x="1238.60" y="435.50" font-size="16" font-weight="normal" fill="#222" textLength="35.20" lengthAdjust="spacingAndGlyphs">Tous</text>
<text x="1369.54" y="435.50" font-size="16" font-weight="normal" fill="#222" textLength="103.46" lengthAdjust="spacingAndGlyphs">Non affectés</text>
<text x="1238.60" y="469.60" font-size="16" font-weight="normal" fill="#222" textLength="56.38" lengthAdjust="spacingAndGlyphs">Affecté</text>
<text x="25.64" y="527.60" font-size="16" font-weight="normal" fill="#222" textLength="234.64" lengthAdjust="spacingAndGlyphs">Etat d&#x27;avancement par élève</text>
<text x="274.63" y="527.60" font-size="16" font-weight="normal" fill="#222" textLength="295.75" lengthAdjust="spacingAndGlyphs">Etat d&#x27;avancement par frais scolaire</text>
<text x="583.02" y="527.60" font-size="16" font-weight="normal" fill="#222" textLength="208.26" lengthAdjust="spacingAndGlyphs">Détail des frais par élève</text>
<text x="889.69" y="519.20" font-size="16" font-weight="normal" fill="#222" textLength="51.26" lengthAdjust="spacingAndGlyphs">Poster</text>
<text x="998.59" y="519.20" font-size="16" font-weight="normal" fill="#222" textLength="67.37" lengthAdjust="spacingAndGlyphs">Exporter</text>
<text x="1103.43" y="517.90" font-size="16" font-weight="normal" fill="#222" textLength="238.62" lengthAdjust="spacingAndGlyphs">Imprimer relevé de paiement</text>
<text x="1404.44" y="520.30" font-size="16" font-weight="normal" fill="#222" textLength="73.28" lengthAdjust="spacingAndGlyphs">Imprimer</text>
<text x="40.52" y="578.00" font-size="16" font-weight="bold" fill="#fff" textLength="68.58" lengthAdjust="spacingAndGlyphs">Matricule</text>
<text x="191.48" y="578.00" font-size="16" font-weight="bold" fill="#fff" textLength="36.25" lengthAdjust="spacingAndGlyphs">Nom</text>
<text x="363.08" y="578.00" font-size="16" font-weight="bold" fill="#fff" textLength="60.65" lengthAdjust="spacingAndGlyphs">Prénom</text>
<text x="507.69" y="578.00" font-size="16" font-weight="bold" fill="#fff" textLength="88.41" lengthAdjust="spacingAndGlyphs">NomClasse</text>
<text x="633.71" y="578.00" font-size="16" font-weight="bold" fill="#fff" textLength="37.79" lengthAdjust="spacingAndGlyphs">Né le</text>
<text x="732.47" y="578.00" font-size="16" font-weight="bold" fill="#fff" textLength="44.49" lengthAdjust="spacingAndGlyphs">Nouv.</text>
<text x="834.20" y="578.00" font-size="16" font-weight="bold" fill="#fff" textLength="29.10" lengthAdjust="spacingAndGlyphs">Ans</text>
<text x="939.01" y="578.00" font-size="16" font-weight="bold" fill="#fff" textLength="50.89" lengthAdjust="spacingAndGlyphs">Inscris</text>
<text x="1098.59" y="578.00" font-size="16" font-weight="bold" fill="#fff" textLength="44.01" lengthAdjust="spacingAndGlyphs">Radié</text>
<text x="1229.60" y="578.00" font-size="16" font-weight="bold" fill="#fff" textLength="71.70" lengthAdjust="spacingAndGlyphs">Total frais</text>
<text x="1359.30" y="578.00" font-size="16" font-weight="bold" fill="#fff" textLength="111.90" lengthAdjust="spacingAndGlyphs">Total déjà payé</text>
<text x="26.20" y="1034.40" font-size="16" font-weight="normal" fill="#222" textLength="31.82" lengthAdjust="spacingAndGlyphs">Sum</text>
</svg></body></html>
